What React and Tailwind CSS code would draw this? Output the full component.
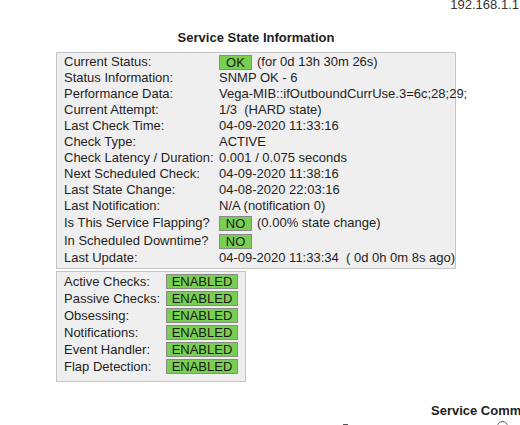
import React from "react";

const Row = ({ label, children, h = "h-[16px]" }) => (
  <div className={`flex items-center ${h}`}>
    <div className="w-[155px] shrink-0 whitespace-nowrap">{label}</div>
    <div className="flex items-center whitespace-pre">{children}</div>
  </div>
);

const Badge = ({ children, w = "w-[33px]" }) => (
  <span
    className={`inline-flex h-[15px] ${w} shrink-0 items-center justify-center border border-[#8a8a8a] bg-[#78cf52] leading-none text-[#1a1a1a]`}
  >
    {children}
  </span>
);

const FeatRow = ({ label }) => (
  <div className="flex h-[17px] items-center">
    <div className="w-[102px] shrink-0 whitespace-nowrap">{label}</div>
    <Badge w="w-[72px]">ENABLED</Badge>
  </div>
);

export default function App() {
  return (
    <div
      className="h-[425px] w-[520px] overflow-hidden bg-white text-[13px] text-[#1e1e1e]"
      style={{ fontFamily: '"Liberation Sans", Arial, sans-serif' }}
    >
      <div className="-mt-[3px] flex h-[15px] justify-end pr-[1px] leading-[15px] text-[#333]">
        192.168.1.1
      </div>

      <div className="ml-[56px] mt-[18px] w-[400px] text-center text-[13px] font-bold leading-[16px] text-[#222]">
        Service State Information
      </div>

      <div className="ml-[56px] mt-[6px] w-[400px] border border-[#c4c4c4] bg-[#f0efef] pb-[2px] pl-[7px] pr-[6px] pt-[1px]">
        <Row label="Current Status:">
          <Badge>OK</Badge>
          <span className="ml-[5px]">(for 0d 13h 30m 26s)</span>
        </Row>
        <Row label="Status Information:">SNMP OK - 6</Row>
        <Row label="Performance Data:">Vega-MIB::ifOutboundCurrUse.3=6c;28;29;</Row>
        <Row label="Current Attempt:">1/3  (HARD state)</Row>
        <Row label="Last Check Time:">04-09-2020 11:33:16</Row>
        <Row label="Check Type:">ACTIVE</Row>
        <Row label="Check Latency / Duration:">0.001 / 0.075 seconds</Row>
        <Row label="Next Scheduled Check:">04-09-2020 11:38:16</Row>
        <Row label="Last State Change:">04-08-2020 22:03:16</Row>
        <Row label="Last Notification:">N/A (notification 0)</Row>
        <Row label="Is This Service Flapping?" h="h-[18px]">
          <Badge>NO</Badge>
          <span className="ml-[5px]">(0.00% state change)</span>
        </Row>
        <Row label="In Scheduled Downtime?" h="h-[18px]">
          <Badge>NO</Badge>
        </Row>
        <Row label="Last Update:">04-09-2020 11:33:34  ( 0d 0h 0m 8s ago)</Row>
      </div>

      <div className="ml-[56px] mt-[2px] w-[190px] border border-[#c4c4c4] bg-[#f0efef] pb-[6px] pl-[7px] pr-[6px] pt-[1px]">
        <FeatRow label="Active Checks:" />
        <FeatRow label="Passive Checks:" />
        <FeatRow label="Obsessing:" />
        <FeatRow label="Notifications:" />
        <FeatRow label="Event Handler:" />
        <FeatRow label="Flap Detection:" />
      </div>

      <div className="mt-[21px] whitespace-nowrap pl-[431px] font-bold leading-[16px] text-[#222]">
        Service Commands
      </div>

      <div className="mt-[2px] flex items-start">
        <div className="ml-[343px] mt-[3px] h-[1px] w-[5px] bg-[#555]" />
        <div className="ml-[149px] h-[11px] w-[11px] shrink-0 rounded-full border border-[#666]" />
      </div>
    </div>
  );
}
